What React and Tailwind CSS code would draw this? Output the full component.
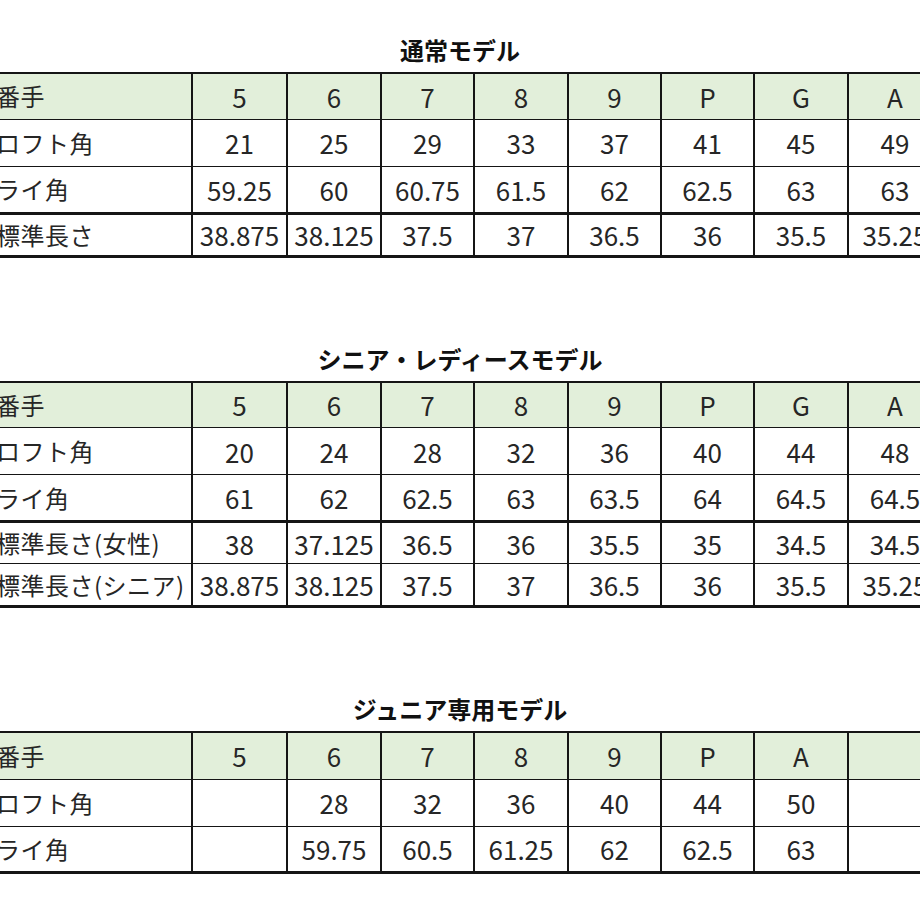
import React from "react";

const colWidths = [203, 95, 94, 93, 94, 93, 93, 94, 94];

const sections = [
  {
    title: "通常モデル",
    gap: "mt-[35px]",
    header: ["番手", "5", "6", "7", "8", "9", "P", "G", "A"],
    heights: [46, 47, 47, 43],
    thick: 3,
    rows: [
      ["ロフト角", "21", "25", "29", "33", "37", "41", "45", "49"],
      ["ライ角", "59.25", "60", "60.75", "61.5", "62", "62.5", "63", "63"],
      ["標準長さ", "38.875", "38.125", "37.5", "37", "36.5", "36", "35.5", "35.25"],
    ],
  },
  {
    title: "シニア・レディースモデル",
    gap: "mt-[86px]",
    header: ["番手", "5", "6", "7", "8", "9", "P", "G", "A"],
    heights: [46, 47, 47, 42, 43],
    thick: 3,
    rows: [
      ["ロフト角", "20", "24", "28", "32", "36", "40", "44", "48"],
      ["ライ角", "61", "62", "62.5", "63", "63.5", "64", "64.5", "64.5"],
      ["標準長さ(女性)", "38", "37.125", "36.5", "36", "35.5", "35", "34.5", "34.5"],
      ["標準長さ(シニア)", "38.875", "38.125", "37.5", "37", "36.5", "36", "35.5", "35.25"],
    ],
  },
  {
    title: "ジュニア専用モデル",
    gap: "mt-[86px]",
    header: ["番手", "5", "6", "7", "8", "9", "P", "A", ""],
    heights: [47, 47, 46],
    thick: -1,
    rows: [
      ["ロフト角", "", "28", "32", "36", "40", "44", "50", ""],
      ["ライ角", "", "59.75", "60.5", "61.25", "62", "62.5", "63", ""],
    ],
  },
];

const SpecTable = ({ section }) => {
  const all = [section.header, ...section.rows];
  return (
    <div className={section.gap}>
      <h2 className="h-[30px] leading-[30px] mb-[7px] text-center text-[24px] font-bold text-[#111]">
        {section.title}
      </h2>
      <div className="w-full overflow-hidden">
        <table className="table-fixed border-collapse ml-[-12px] w-[953px]">
          <colgroup>
            {colWidths.map((w, i) => (
              <col key={i} style={{ width: w }} />
            ))}
          </colgroup>
          <tbody>
            {all.map((row, r) => {
              const isHead = r === 0;
              const last = r === all.length - 1;
              const topLine =
                r === 0
                  ? "border-t-2"
                  : r === section.thick
                  ? "border-t-[3px]"
                  : "border-t";
              return (
                <tr
                  key={r}
                  style={{ height: section.heights[r] }}
                  className={`${topLine} ${last ? "border-b-[3px]" : ""} border-[#151515] ${
                    isHead ? "bg-[#e2efda]" : "bg-white"
                  }`}
                >
                  {row.map((cell, c) => (
                    <td
                      key={c}
                      className={`border-x-2 border-[#151515] p-0 whitespace-nowrap text-[#262626] ${
                        c === 0 ? "text-left pl-[6px] text-[24px] tracking-[0.5px]" : "text-center text-[26px]"
                      }`}
                    >
                      {cell}
                    </td>
                  ))}
                </tr>
              );
            })}
          </tbody>
        </table>
      </div>
    </div>
  );
};

const App = () => {
  return (
    <div
      className="w-[920px] h-[920px] bg-white overflow-hidden"
      style={{ fontFamily: '"Noto Sans CJK JP", "Noto Sans", sans-serif' }}
    >
      {sections.map((s, i) => (
        <SpecTable key={i} section={s} />
      ))}
    </div>
  );
};

export default App;
